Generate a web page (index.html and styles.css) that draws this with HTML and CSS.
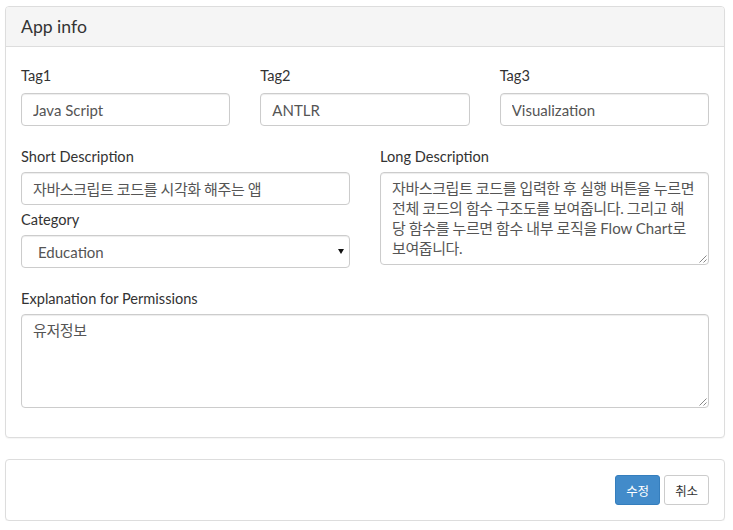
FILE: index.html
```html
<!DOCTYPE html>
<html lang="ko">
<head>
<meta charset="utf-8">
<title>App info</title>
<link rel="stylesheet" href="styles.css">
</head>
<body>
<div class="page">
  <section class="panel">
    <header class="panel-heading"><h3 class="panel-title">App info</h3></header>
    <div class="panel-body">
      <div class="grid3">
        <div class="field">
          <label class="lbl">Tag1</label>
          <input class="form-control" type="text" value="Java Script">
        </div>
        <div class="field">
          <label class="lbl">Tag2</label>
          <input class="form-control" type="text" value="ANTLR">
        </div>
        <div class="field">
          <label class="lbl">Tag3</label>
          <input class="form-control" type="text" value="Visualization">
        </div>
      </div>
      <div class="grid2">
        <div class="col">
          <div class="field">
            <label class="lbl lbl-gap">Short Description</label>
            <input class="form-control ko" type="text" value="자바스크립트 코드를 시각화 해주는 앱">
          </div>
          <div class="field field-cat">
            <label class="lbl lbl-cat">Category</label>
            <div class="select-wrap">
              <select class="form-control select">
                <option>Education</option>
              </select>
            </div>
          </div>
        </div>
        <div class="col">
          <div class="field">
            <label class="lbl lbl-gap">Long Description</label>
            <div class="form-control area area-long"><span class="ko">자바스크립트 코드를 입력한 후 실행 버튼을 누르면</span><br><span class="ko">전체 코드의 함수 구조도를 보여줍니다. 그리고 해</span><br><span class="ko">당 함수를 누르면 함수 내부 로직을 </span>Flow Chart<span class="ko">로</span><br><span class="ko">보여줍니다.</span><svg class="grip" width="9" height="9" viewBox="0 0 9 9"><path d="M8.5 1.5L1.5 8.5M8.5 5.5L5.5 8.5" stroke="#888" stroke-width="1" fill="none"/></svg></div>
          </div>
        </div>
      </div>
      <div class="field field-perm">
        <label class="lbl lbl-perm">Explanation for Permissions</label>
        <div class="form-control area area-perm"><span class="ko">유저정보</span><svg class="grip" width="9" height="9" viewBox="0 0 9 9"><path d="M8.5 1.5L1.5 8.5M8.5 5.5L5.5 8.5" stroke="#888" stroke-width="1" fill="none"/></svg></div>
      </div>
    </div>
  </section>
  <section class="panel panel-actions">
    <div class="actions">
      <button class="btn btn-primary" type="button">수정</button>
      <button class="btn btn-default" type="button">취소</button>
    </div>
  </section>
</div>
</body>
</html>
```
FILE: styles.css
```css
* { box-sizing: border-box; }

body {
  margin: 0;
  font-family: Lato, "Noto Sans CJK KR", sans-serif;
  font-size: 15px;
  color: #333;
  background: #fff;
}

.page {
  padding: 6px 8px 0 5px;
}

.panel {
  border: 1px solid #ddd;
  border-radius: 4px;
  background: #fff;
  box-shadow: 0 1px 1px rgba(0, 0, 0, 0.04);
}

.panel + .panel {
  margin-top: 21px;
}

.panel-heading {
  height: 40px;
  padding: 0 15px 1px;
  background: #f5f5f5;
  border-bottom: 1px solid #ddd;
  border-radius: 3px 3px 0 0;
  display: flex;
  align-items: center;
}

.panel-title {
  margin: 0;
  font-size: 17.6px;
  font-weight: 400;
  color: #333;
}

.panel-body {
  padding: 19px 15px 29px;
}

.lbl {
  display: block;
  font-size: 14.6px;
  line-height: 20px;
  margin-bottom: 7px;
}

.lbl-gap { margin-bottom: 5px; }
.lbl-cat { margin-bottom: 5px; }
.lbl-perm { margin-bottom: 5px; }

.grid3 {
  display: grid;
  grid-template-columns: repeat(3, 1fr);
  column-gap: 30px;
}

.grid2 {
  display: grid;
  grid-template-columns: 1fr 1fr;
  column-gap: 30px;
  margin-top: 21px;
}

.field-cat { margin-top: 5px; }
.field-perm { margin-top: 21px; }

.form-control {
  display: block;
  width: 100%;
  height: 33px;
  margin: 0;
  padding: 0 11px;
  font-family: Lato, "Noto Sans CJK KR", sans-serif;
  font-size: 15px;
  color: #555;
  background: #fff;
  border: 1px solid #ccc;
  border-radius: 4px;
  box-shadow: inset 0 1px 1px rgba(0, 0, 0, 0.075);
  outline: none;
}

.ko { letter-spacing: -0.4px; }

.select-wrap {
  position: relative;
}

.select {
  appearance: none;
  -webkit-appearance: none;
  padding-left: 16px;
}

.select-wrap::after {
  content: "";
  position: absolute;
  right: 6px;
  top: 14px;
  border-left: 3px solid transparent;
  border-right: 3px solid transparent;
  border-top: 5px solid #111;
}

.area {
  position: relative;
  height: 94px;
  padding: 5px 11px;
  line-height: 20px;
  white-space: nowrap;
  overflow: hidden;
}

.area-long { height: 93px; }

.grip {
  position: absolute;
  right: 1px;
  bottom: 1px;
}

.actions {
  padding: 15px;
  display: flex;
  justify-content: flex-end;
  gap: 4px;
}

.btn {
  width: 45px;
  height: 30px;
  padding: 0;
  font-family: Lato, "Noto Sans CJK KR", sans-serif;
  font-size: 12.5px;
  letter-spacing: -0.3px;
  border: 1px solid transparent;
  border-radius: 3px;
  cursor: pointer;
}

.btn-primary {
  color: #fff;
  background: #428bca;
  border-color: #357ebd;
}

.btn-default {
  color: #333;
  background: #fff;
  border-color: #ccc;
}
```
